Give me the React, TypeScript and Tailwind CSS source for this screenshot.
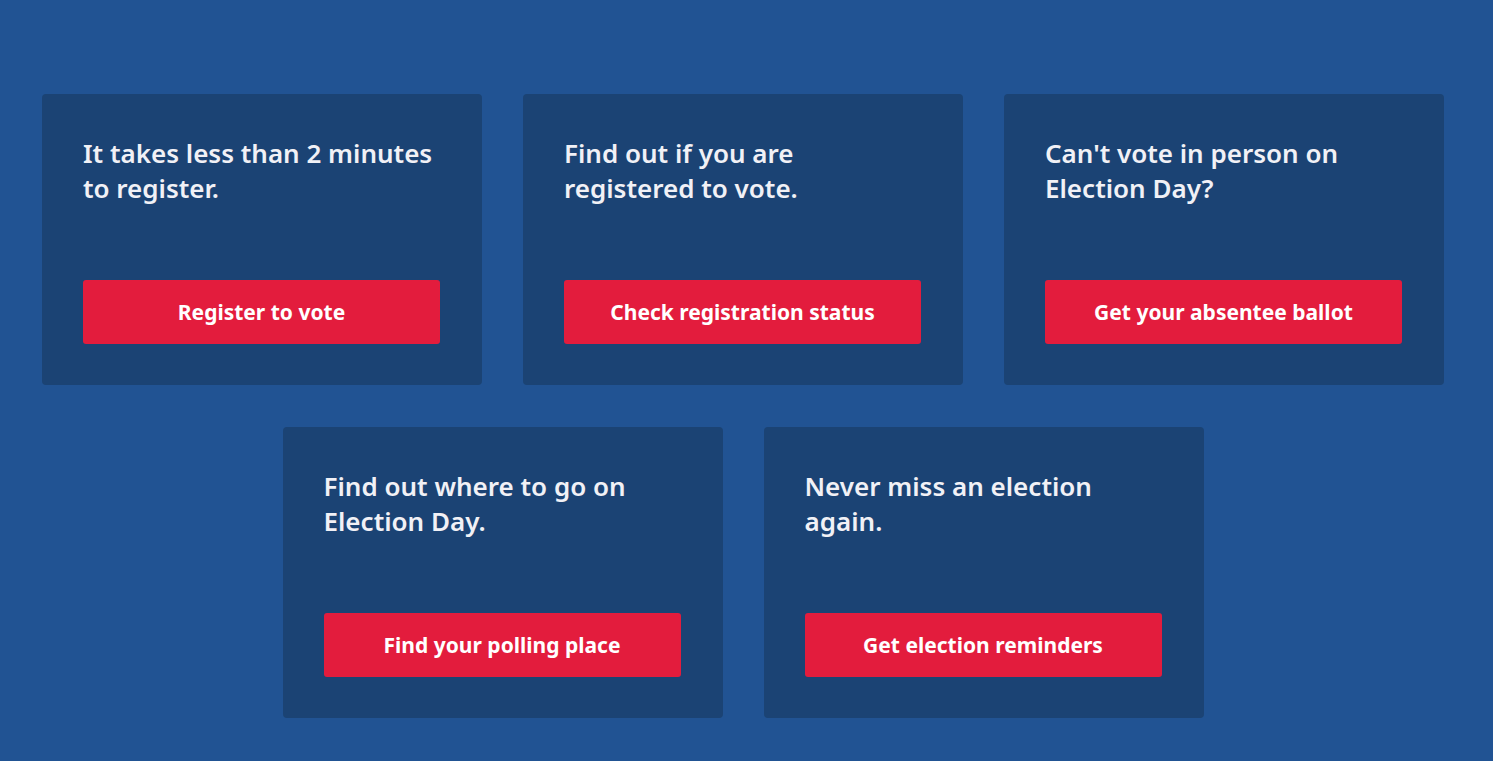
import React from "react";

interface ActionCard {
    text: string;
    button: string;
}

const cards: ActionCard[] = [
    { text: "It takes less than 2 minutes to register.", button: "Register to vote" },
    { text: "Find out if you are registered to vote.", button: "Check registration status" },
    { text: "Can't vote in person on Election Day?", button: "Get your absentee ballot" },
    { text: "Find out where to go on Election Day.", button: "Find your polling place" },
    { text: "Never miss an election again.", button: "Get election reminders" },
];

const Card: React.FC<ActionCard> = ({ text, button }) => (
    <div className="flex h-[291px] w-[440px] flex-col rounded-[4px] bg-[#1b4374] px-[41px] pt-[42px] pb-[41px]">
        <h2 className="text-[26px] leading-[35px] font-semibold text-[#f1f1f6]">
            {text}
        </h2>
        <button className="mt-auto flex h-[64px] w-[357px] items-center justify-center rounded-[3px] bg-[#e31c3d] pt-[2px] text-[21px] font-bold text-white">
            {button}
        </button>
    </div>
);

export default function App() {
    return (
        <div
            className="min-h-[761px] w-full bg-[#215393] pt-[94px] pb-[44px]"
            style={{ fontFamily: '"Noto Sans", sans-serif' }}
        >
            <div className="ml-[42px] flex w-[1402px] flex-wrap justify-center gap-x-[41px] gap-y-[42px]">
                {cards.map((c) => (
                    <Card key={c.button} {...c} />
                ))}
            </div>
        </div>
    );
}
